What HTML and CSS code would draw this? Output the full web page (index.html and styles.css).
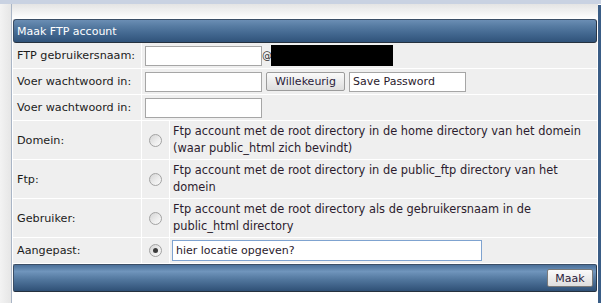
FILE: index.html
```html
<!DOCTYPE html>
<html lang="nl">
<head>
<meta charset="utf-8">
<title>Maak FTP account</title>
<link rel="stylesheet" href="styles.css">
</head>
<body>
<div class="topband"></div>
<div class="page">
  <div class="gutter"></div>
  <div class="main">
    <div class="bar-head">Maak FTP account</div>
    <div class="form">
      <div class="cell label h26">FTP gebruikersnaam:</div>
      <div class="cell value span h26">
        <input class="txt" type="text">
        <span class="at">@</span><span class="redact"></span>
      </div>

      <div class="cell label h26">Voer wachtwoord in:</div>
      <div class="cell value span h26 gap">
        <input class="txt" type="password">
        <button class="btn btn-rand" type="button">Willekeurig</button>
        <input class="txt" type="text" value="Save Password">
      </div>

      <div class="cell label h26">Voer wachtwoord in:</div>
      <div class="cell value span h26">
        <input class="txt" type="password">
      </div>

      <div class="cell label h39">Domein:</div>
      <div class="cell radio h39"><span class="rb"></span></div>
      <div class="cell desc h39">Ftp account met de root directory in de home directory van het domein<br>(waar public_html zich bevindt)</div>

      <div class="cell label h39">Ftp:</div>
      <div class="cell radio h39"><span class="rb"></span></div>
      <div class="cell desc h39">Ftp account met de root directory in de public_ftp directory van het<br>domein</div>

      <div class="cell label h39">Gebruiker:</div>
      <div class="cell radio h39"><span class="rb"></span></div>
      <div class="cell desc h39">Ftp account met de root directory als de gebruikersnaam in de<br>public_html directory</div>

      <div class="cell label h26">Aangepast:</div>
      <div class="cell radio h26"><span class="rb on"></span></div>
      <div class="cell custom h26"><input class="txt txt-custom" type="text" value="hier locatie opgeven?"></div>
    </div>
    <div class="bar-foot"><button class="btn btn-make" type="button">Maak</button></div>
  </div>
  <div class="rbar"></div>
</div>
</body>
</html>
```

FILE: styles.css
```css
html, body {
  margin: 0;
  padding: 0;
  background: #fff;
}
body {
  font-family: "DejaVu Sans", Verdana, sans-serif;
  font-size: 11px;
  color: #1c1c1c;
  overflow: hidden;
}
.topband {
  height: 4px;
  background: #c9d2e2;
}
.page {
  display: flex;
  height: 299px;
}
.gutter {
  width: 11px;
  background: linear-gradient(to right, #f3f3f3, #e6e6e6);
  border-right: 1px solid #a9b5c6;
}
.main {
  flex: 1;
  padding: 15px 1px 0 1px;
  background: linear-gradient(#e4e4e4, #f6f6f6 10px, #ffffff 15px);
}
.rbar {
  width: 3px;
  background: #3a5d86;
  margin-top: 1px;
}
.bar-head {
  box-sizing: border-box;
  height: 24px;
  display: flex;
  align-items: center;
  padding-left: 3px;
  color: #fff;
  font-size: 11px;
  border: 1px solid #3b4e66;
  border-bottom-color: #25313f;
  border-right-color: #2a3747;
  border-radius: 3px;
  background: linear-gradient(#6b8eb4 0%, #557aa1 30%, #41668e 65%, #30537a 100%);
}
.form {
  display: grid;
  grid-template-columns: 129px 28px 1fr;
}
.cell {
  box-sizing: border-box;
  background: #efefef;
  border-bottom: 1px solid #fff;
  display: flex;
  align-items: center;
}
.h26 { height: 26px; }
.h39 { height: 39px; }
.label {
  border-right: 1px solid #fff;
  padding-left: 4px;
  white-space: nowrap;
  font-size: 11.2px;
}
.value {
  padding-left: 3px;
}
.span {
  grid-column: 2 / 4;
}
.gap {
  gap: 4px;
}
.radio {
  border-right: 1px solid #fff;
  justify-content: center;
}
.desc {
  padding-left: 3px;
  line-height: 17px;
  font-size: 11.4px;
  color: #2c1c2e;
  white-space: nowrap;
}
.custom {
  padding-left: 2px;
}
.txt {
  box-sizing: border-box;
  width: 117px;
  height: 20px;
  margin: 0;
  padding: 0 3px;
  border: 1px solid #a6a6a6;
  background: #fff;
  font-family: "DejaVu Sans", Verdana, sans-serif;
  font-size: 11px;
  color: #2a1a2c;
  outline: none;
}
.txt-custom {
  width: 310px;
  height: 21px;
  border-color: #7fa3d0;
}
.at {
  font-size: 10px;
  letter-spacing: -1px;
  color: #333;
}
.redact {
  display: inline-block;
  width: 122px;
  height: 21px;
  background: #000;
}
.btn {
  box-sizing: border-box;
  margin: 0;
  padding: 0;
  font-family: "DejaVu Sans", Verdana, sans-serif;
  font-size: 11px;
  color: #2a1a3a;
  border: 1px solid #9c9c9c;
  border-radius: 2px;
  background: linear-gradient(#fafafa, #ececec 50%, #dedede);
}
.btn-rand {
  width: 79px;
  height: 19px;
}
.rb {
  box-sizing: border-box;
  width: 13px;
  height: 13px;
  border-radius: 50%;
  border: 1px solid #a2a2a2;
  background: linear-gradient(135deg, #d4d4d4, #eeeeee 60%, #fafafa);
  display: flex;
  align-items: center;
  justify-content: center;
}
.rb.on::after {
  content: "";
  width: 5px;
  height: 5px;
  border-radius: 50%;
  background: #3a3a3a;
}
.bar-foot {
  box-sizing: border-box;
  height: 28px;
  display: flex;
  align-items: center;
  justify-content: flex-end;
  padding-right: 3px;
  border: 1px solid #3b4e66;
  border-bottom-color: #25313f;
  border-right-color: #2a3747;
  border-radius: 2px;
  background: linear-gradient(#4b7099 0%, #7095bc 25%, #52779e 55%, #2f5076 100%);
}
.btn-make {
  width: 46px;
  height: 18px;
  border-color: #7a7a7a;
}
```
